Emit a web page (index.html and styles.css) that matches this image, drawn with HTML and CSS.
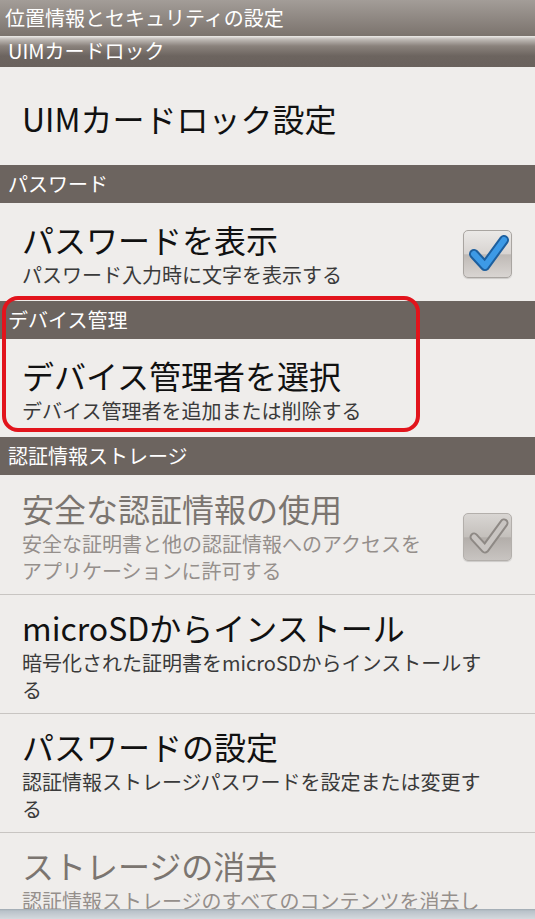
FILE: index.html
```html
<!DOCTYPE html>
<html lang="ja">
<head>
    <meta charset="UTF-8">
    <meta name="viewport" content="width=device-width, initial-scale=1.0">
    <title>位置情報とセキュリティの設定</title>
    <link rel="stylesheet" href="styles.css">
</head>
<body>

<div class="titlebar">位置情報とセキュリティの設定</div>

<div class="category category-top">UIMカードロック</div>
<div class="pref">
    <div class="pref-text">
        <div class="pref-title">UIMカードロック設定</div>
    </div>
</div>

<div class="category">パスワード</div>
<div class="pref">
    <div class="pref-text">
        <div class="pref-title">パスワードを表示</div>
        <div class="pref-summary">パスワード入力時に文字を表示する</div>
    </div>
    <div class="checkbox">
        <svg width="49" height="48" viewBox="0 0 49 48">
            <polyline points="11,24 22,36 41,10" fill="none" stroke="#1d5f9e" stroke-width="10" stroke-linecap="round" stroke-linejoin="round"/>
            <polyline points="11,24 22,36 41,10" fill="none" stroke="#3d9ae6" stroke-width="6" stroke-linecap="round" stroke-linejoin="round"/>
        </svg>
    </div>
</div>

<div class="marked">
    <div class="category">デバイス管理</div>
    <div class="pref">
        <div class="pref-text">
            <div class="pref-title">デバイス管理者を選択</div>
            <div class="pref-summary">デバイス管理者を追加または削除する</div>
        </div>
    </div>
    <div class="mark"></div>
</div>

<div class="category">認証情報ストレージ</div>
<div class="pref pref-list disabled tall">
    <div class="pref-text">
        <div class="pref-title">安全な認証情報の使用</div>
        <div class="pref-summary">安全な証明書と他の認証情報へのアクセスをアプリケーションに許可する</div>
    </div>
    <div class="checkbox checkbox-off">
        <svg width="49" height="48" viewBox="0 0 49 48">
            <polyline points="11,24 22,36 41,10" fill="none" stroke="#8e8985" stroke-width="9" stroke-linecap="round" stroke-linejoin="round"/>
            <polyline points="11,24 22,36 41,10" fill="none" stroke="#c9c5c2" stroke-width="5" stroke-linecap="round" stroke-linejoin="round"/>
        </svg>
    </div>
</div>
<div class="pref pref-list">
    <div class="pref-text">
        <div class="pref-title">microSDからインストール</div>
        <div class="pref-summary">暗号化された証明書をmicroSDからインストールする</div>
    </div>
</div>
<div class="pref pref-list">
    <div class="pref-text">
        <div class="pref-title">パスワードの設定</div>
        <div class="pref-summary">認証情報ストレージパスワードを設定または変更する</div>
    </div>
</div>
<div class="pref pref-list disabled">
    <div class="pref-text">
        <div class="pref-title">ストレージの消去</div>
        <div class="pref-summary">認証情報ストレージのすべてのコンテンツを消去してパスワードをリセットする</div>
    </div>
</div>

<div class="bottom-edge"></div>

</body>
</html>
```

FILE: styles.css
```css
body {
    margin: 0;
    padding: 0;
    height: 919px;
    overflow: hidden;
    background-color: #efedeb;
    font-family: "Noto Sans CJK JP", "Noto Sans", sans-serif;
    color: #111;
}

.titlebar {
    height: 36px;
    line-height: 36px;
    padding-left: 5px;
    font-size: 20px;
    color: #fff;
    background: linear-gradient(#a39d98, #7b736d);
}

.category {
    height: 38px;
    line-height: 38px;
    padding-left: 8px;
    font-size: 20px;
    color: #fff;
    background-color: #6c645f;
}

.category-top {
    height: 31px;
    line-height: 30px;
    background: linear-gradient(#eeece9 0, #c2bdb9 3px, #8a827c 10px, #6c645f 20px, #6a625d 100%);
}

.pref {
    display: flex;
    align-items: center;
    box-sizing: border-box;
    min-height: 98px;
    padding: 14px 23px 10px 22px;
}

.pref-text {
    flex: 1;
    padding-right: 25px;
}

.pref-title {
    font-size: 32px;
    line-height: 36px;
}

.pref-summary {
    margin-top: 4px;
    font-size: 20px;
    line-height: 27px;
    color: #3a3a3a;
}

.pref-list + .pref-list {
    border-top: 1px solid #c8c5c2;
}

.tall {
    min-height: 119px;
}

.disabled .pref-title {
    color: #7b7570;
}

.disabled .pref-summary {
    color: #958f8b;
}

.checkbox {
    width: 49px;
    height: 48px;
    box-sizing: border-box;
    border: 1px solid #a9a5a1;
    border-radius: 5px;
    background: linear-gradient(#ebe9e7 0%, #d8d4d1 49%, #bfbab6 52%, #d9d5d2 100%);
    box-shadow: 0 1px 1px rgba(0, 0, 0, 0.15);
}

.checkbox svg {
    display: block;
    margin: -1px;
}

.checkbox-off {
    border-color: #b3afab;
    background: linear-gradient(#d9d6d3 0%, #c4c0bc 49%, #b3aeaa 52%, #c8c4c1 100%);
}

.marked {
    position: relative;
}

.mark {
    position: absolute;
    top: -5px;
    left: 2px;
    width: 418px;
    height: 136px;
    box-sizing: border-box;
    border: 4px solid #e2141c;
    border-radius: 16px;
}

.bottom-edge {
    position: fixed;
    left: 0;
    right: 0;
    bottom: 0;
    height: 10px;
    background: linear-gradient(#9fa9b1 0, #b9c2c9 2px, #d4d9dd 100%);
}
```
